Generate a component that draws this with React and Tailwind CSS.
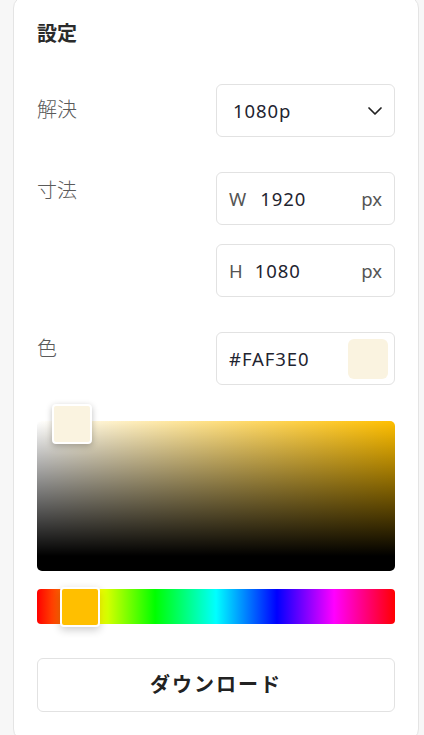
import { ChevronDown } from "lucide-react";

const latin = { fontFamily: '"Noto Sans", "Noto Sans CJK JP", sans-serif' };

const Field = ({ children, className = "" }) => (
  <div
    className={`flex h-[53px] items-center rounded-md border border-[#e2e2e2] bg-white px-3 text-[18.5px] text-[#1f2430] ${className}`}
  >
    {children}
  </div>
);

export default function App() {
  return (
    <div className="min-h-[735px] bg-[#f7f7f7] pl-[13px] pr-[5px]" style={latin}>
      <div className="-mt-[4px] min-h-[745px] rounded-xl border border-[#e4e4e4] bg-white px-[23px] pt-[23px]">
        {/* TITLE */}
        <h2 className="text-[20px] font-bold leading-[28px] text-[#2b2b2b]">設定</h2>

        {/* RESOLUTION */}
        <div className="mt-[36px] grid grid-cols-2">
          <div className="pt-[12px] text-[20px] font-light leading-[28px] text-[#5a5a5a]">解決</div>
          <Field className="justify-between pl-4 pr-[7px]">
            <span className="tracking-[0.05em]">1080p</span>
            <ChevronDown size={24} strokeWidth={1.75} className="text-[#222]" />
          </Field>
        </div>

        {/* SIZE */}
        <div className="mt-[35px] grid grid-cols-2">
          <div className="pt-[5px] text-[20px] font-light leading-[28px] text-[#5a5a5a]">寸法</div>
          <div className="flex flex-col gap-[19px]">
            <Field>
              <span className="text-[#555]">W</span>
              <span className="ml-[14px] tracking-[0.05em]">1920</span>
              <span className="ml-auto text-[#555]">px</span>
            </Field>
            <Field>
              <span className="text-[#555]">H</span>
              <span className="ml-[12px] tracking-[0.05em]">1080</span>
              <span className="ml-auto text-[#555]">px</span>
            </Field>
          </div>
        </div>

        {/* COLOR */}
        <div className="mt-[35px] grid grid-cols-2">
          <div className="pt-[3px] text-[20px] font-light leading-[28px] text-[#5a5a5a]">色</div>
          <Field className="justify-between pr-[6px]">
            <span className="tracking-[0.05em]">#FAF3E0</span>
            <div className="h-[40px] w-[40px] rounded-md bg-[#FAF3E0]" />
          </Field>
        </div>

        {/* SATURATION PICKER */}
        <div className="relative mt-[36px] h-[150px] rounded-[5px] bg-[linear-gradient(to_bottom,transparent,#000_90%),linear-gradient(to_right,#fff,#ffbf00)]">
          <div className="absolute left-[15px] top-[-17px] h-[40px] w-[40px] rounded-[4px] border-2 border-white bg-[#FAF3E0] shadow-[0_2px_6px_rgba(0,0,0,0.25)]" />
        </div>

        {/* HUE SLIDER */}
        <div className="relative mt-[18px] h-[35px] rounded-[4px] bg-[linear-gradient(to_right,#f00_0%,#ff0_17%,#0f0_33%,#0ff_50%,#00f_67%,#f0f_83%,#f00_100%)]">
          <div className="absolute left-[23px] top-[-2px] h-[40px] w-[40px] rounded-[4px] border-2 border-white bg-[#FFBF00] shadow-[0_3px_8px_rgba(0,0,0,0.2)]" />
        </div>

        {/* DOWNLOAD */}
        <button className="mt-[34px] flex h-[54px] w-full items-center justify-center rounded-md border border-[#e2e2e2] bg-white text-[20px] font-bold tracking-[0.1em] text-[#222]">
          ダウンロード
        </button>
      </div>
    </div>
  );
}
